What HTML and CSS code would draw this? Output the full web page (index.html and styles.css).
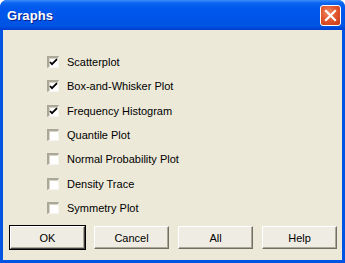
FILE: index.html
```html
<!DOCTYPE html>
<html>
<head>
<meta charset="utf-8">
<link rel="stylesheet" href="styles.css">
</head>
<body>
<div class="window">
  <div class="titlebar">
    <span class="title">Graphs</span>
    <span class="close"><svg width="13" height="13" viewBox="0 0 13 13"><path d="M2 2 L11 11 M11 2 L2 11" stroke="#fff" stroke-width="2.2" stroke-linecap="square"/></svg></span>
  </div>
  <div class="client">
    <div class="list">
      <label class="row"><span class="box checked"><svg width="9" height="9" viewBox="0 0 9 9"><path d="M1 4 L3 6.2 L8 1.2" fill="none" stroke="#000" stroke-width="1.8"/></svg></span>Scatterplot</label>
      <label class="row"><span class="box checked"><svg width="9" height="9" viewBox="0 0 9 9"><path d="M1 4 L3 6.2 L8 1.2" fill="none" stroke="#000" stroke-width="1.8"/></svg></span>Box-and-Whisker Plot</label>
      <label class="row"><span class="box checked"><svg width="9" height="9" viewBox="0 0 9 9"><path d="M1 4 L3 6.2 L8 1.2" fill="none" stroke="#000" stroke-width="1.8"/></svg></span>Frequency Histogram</label>
      <label class="row"><span class="box"></span>Quantile Plot</label>
      <label class="row"><span class="box"></span>Normal Probability Plot</label>
      <label class="row"><span class="box"></span>Density Trace</label>
      <label class="row"><span class="box"></span>Symmetry Plot</label>
    </div>
    <div class="buttons">
      <button class="btn default">OK</button>
      <button class="btn">Cancel</button>
      <button class="btn">All</button>
      <button class="btn">Help</button>
    </div>
  </div>
</div>
</body>
</html>
```
FILE: styles.css
```css
html, body {
  margin: 0;
  padding: 0;
  background: #ffffff;
}
.window {
  width: 345px;
  height: 263px;
  display: flex;
  flex-direction: column;
  border-radius: 7px 7px 0 0;
  overflow: hidden;
  background: #0054e3;
  font-family: "Liberation Sans", Arial, sans-serif;
}
.titlebar {
  height: 30px;
  flex: none;
  display: flex;
  align-items: center;
  justify-content: space-between;
  padding: 0 4px 0 7px;
  background: linear-gradient(#3c8dfa 0px, #0a66f0 3px, #0058ee 8px, #0055e9 18px, #0054e3 26px, #003dd0 30px);
}
.title {
  color: #ffffff;
  font-weight: bold;
  font-size: 13px;
  letter-spacing: 0.1px;
  text-shadow: 1px 1px 0 #0a1e86;
  margin-top: 1px;
}
.close {
  width: 19px;
  height: 19px;
  border: 1px solid #ffffff;
  border-radius: 3px;
  display: flex;
  align-items: center;
  justify-content: center;
  background: radial-gradient(circle at 40% 35%, #f08a64 0%, #e0532c 50%, #c63a14 100%);
  margin-top: 1px;
}
.client {
  flex: 1;
  margin: 0 3px 3px 3px;
  background: #ece9d8;
  display: flex;
  flex-direction: column;
  padding: 20px 0 0 0;
}
.list {
  display: flex;
  flex-direction: column;
  padding-left: 44px;
}
.row {
  height: 24.33px;
  display: flex;
  align-items: center;
  font-size: 11px;
  color: #000;
}
.box {
  width: 9px;
  height: 9px;
  flex: none;
  border-top: 2px solid #aca899;
  border-left: 2px solid #aca899;
  border-right: 1px solid #f5f4ee;
  border-bottom: 1px solid #f5f4ee;
  box-shadow: inset 1px 1px 0 #d8d5c8;
  background: #ffffff;
  margin-right: 8px;
  display: flex;
  align-items: center;
  justify-content: center;
}
.buttons {
  display: flex;
  gap: 9px;
  padding-left: 7px;
  margin-top: 6px;
}
.btn {
  width: 75px;
  height: 23px;
  box-sizing: border-box;
  font-family: "Liberation Sans", Arial, sans-serif;
  font-size: 11px;
  color: #000;
  background: #efede3;
  border-top: 1px solid #ffffff;
  border-left: 1px solid #ffffff;
  border-right: 1px solid #716f64;
  border-bottom: 1px solid #716f64;
  box-shadow: inset -1px -1px 0 #aca899;
  padding: 0;
}
.btn.default {
  outline: 1px solid #000;
  outline-offset: 0;
  border-right-color: #404040;
  border-bottom-color: #404040;
}
```
